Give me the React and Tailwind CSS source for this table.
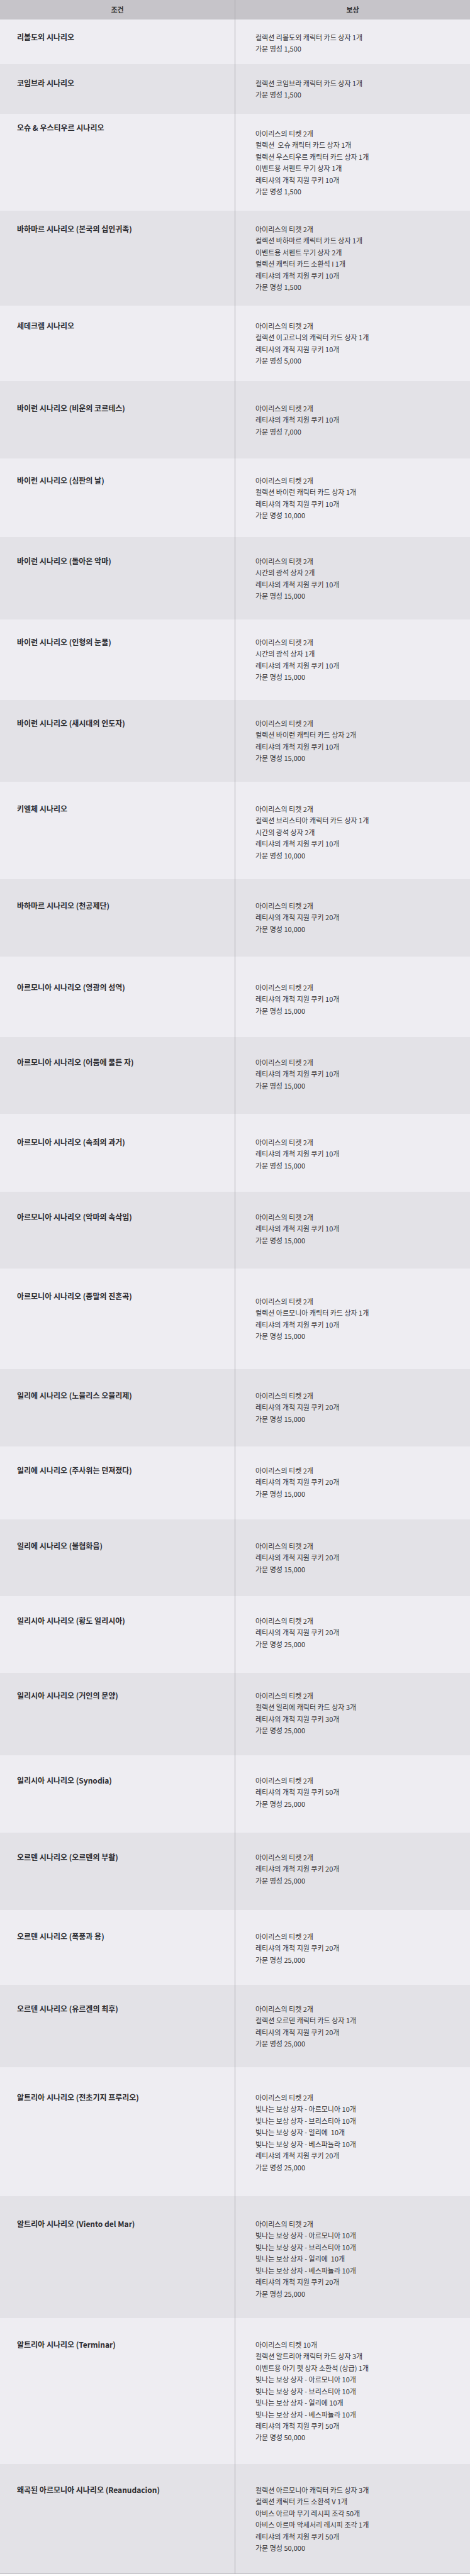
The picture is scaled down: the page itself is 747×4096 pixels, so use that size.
const ticket = '아이리스의 티켓 2개'
const cookie = (n) => `레티샤의 개척 지원 쿠키 ${n}개`
const fame = (n) => `가문 명성 ${n}`
const shining = [
  '빛나는 보상 상자 - 아르모니아 10개',
  '빛나는 보상 상자 - 브리스티아 10개',
  '빛나는 보상 상자 - 일리에  10개',
  '빛나는 보상 상자 - 베스파뇰라 10개',
]

// h: row height, l / r: top offset of the condition and reward text
const rows = [
  { title: '리볼도외 시나리오', h: 'h-[71px]', l: 'pt-[19px]', r: 'pt-[19px]', items: ['컬렉션 리볼도외 캐릭터 카드 상자 1개', fame('1,500')] },
  { title: '코임브라 시나리오', h: 'h-[79px]', l: 'pt-[21px]', r: 'pt-[21px]', items: ['컬렉션 코임브라 캐릭터 카드 상자 1개', fame('1,500')] },
  { title: '오슈 & 우스티우르 시나리오', h: 'h-[154px]', l: 'pt-[13px]', r: 'pt-[22px]', items: [ticket, '컬렉션  오슈 캐릭터 카드 상자 1개', '컬렉션 우스티우르 캐릭터 카드 상자 1개', '이벤트용 서펜트 무기 상자 1개', cookie(10), fame('1,500')] },
  { title: '바하마르 시나리오 (본국의 십인귀족)', h: 'h-[151px]', l: 'pt-[20px]', r: 'pt-[20px]', items: [ticket, '컬렉션 바하마르 캐릭터 카드 상자 1개', '이벤트용 서펜트 무기 상자 2개', '컬렉션 캐릭터 카드 소환석 I 1개', cookie(10), fame('1,500')] },
  { title: '세데크렘 시나리오', h: 'h-[120px]', l: 'pt-[23px]', r: 'pt-[23px]', items: [ticket, '컬렉션 이고르니의 캐릭터 카드 상자 1개', cookie(10), fame('5,000')] },
  { title: '바이런 시나리오 (비운의 코르테스)', h: 'h-[123px]', l: 'pt-[34px]', r: 'pt-[34px]', items: [ticket, cookie(10), fame('7,000')] },
  { title: '바이런 시나리오 (심판의 날)', h: 'h-[125px]', l: 'pt-[26px]', r: 'pt-[26px]', items: [ticket, '컬렉션 바이런 캐릭터 카드 상자 1개', cookie(10), fame('10,000')] },
  { title: '바이런 시나리오 (돌아온 악마)', h: 'h-[131px]', l: 'pt-[29px]', r: 'pt-[29px]', items: [ticket, '시간의 광석 상자 2개', cookie(10), fame('15,000')] },
  { title: '바이런 시나리오 (인형의 눈물)', h: 'h-[128px]', l: 'pt-[27px]', r: 'pt-[27px]', items: [ticket, '시간의 광석 상자 1개', cookie(10), fame('15,000')] },
  { title: '바이런 시나리오 (새시대의 인도자)', h: 'h-[130px]', l: 'pt-[28px]', r: 'pt-[28px]', items: [ticket, '컬렉션 바이런 캐릭터 카드 상자 2개', cookie(10), fame('15,000')] },
  { title: '키엘체 시나리오', h: 'h-[155px]', l: 'pt-[34px]', r: 'pt-[34px]', items: [ticket, '컬렉션 브리스티아 캐릭터 카드 상자 1개', '시간의 광석 상자 2개', cookie(10), fame('10,000')] },
  { title: '바하마르 시나리오 (천공제단)', h: 'h-[123px]', l: 'pt-[33px]', r: 'pt-[33px]', items: [ticket, cookie(20), fame('10,000')] },
  { title: '아르모니아 시나리오 (영광의 성역)', h: 'h-[128px]', l: 'pt-[40px]', r: 'pt-[40px]', items: [ticket, cookie(10), fame('15,000')] },
  { title: '아르모니아 시나리오 (어둠에 물든 자)', h: 'h-[122px]', l: 'pt-[31px]', r: 'pt-[31px]', items: [ticket, cookie(10), fame('15,000')] },
  { title: '아르모니아 시나리오 (속죄의 과거)', h: 'h-[124px]', l: 'pt-[36px]', r: 'pt-[36px]', items: [ticket, cookie(10), fame('15,000')] },
  { title: '아르모니아 시나리오 (악마의 속삭임)', h: 'h-[122px]', l: 'pt-[31px]', r: 'pt-[31px]', items: [ticket, cookie(10), fame('15,000')] },
  { title: '아르모니아 시나리오 (종말의 진혼곡)', h: 'h-[160px]', l: 'pt-[35px]', r: 'pt-[43px]', items: [ticket, '컬렉션 아르모니아 캐릭터 카드 상자 1개', cookie(10), fame('15,000')] },
  { title: '일리에 시나리오 (노블리스 오블리제)', h: 'h-[123px]', l: 'pt-[33px]', r: 'pt-[33px]', items: [ticket, cookie(20), fame('15,000')] },
  { title: '일리에 시나리오 (주사위는 던져졌다)', h: 'h-[116px]', l: 'pt-[29px]', r: 'pt-[29px]', items: [ticket, cookie(20), fame('15,000')] },
  { title: '일리에 시나리오 (불협화음)', h: 'h-[122px]', l: 'pt-[33px]', r: 'pt-[33px]', items: [ticket, cookie(20), fame('15,000')] },
  { title: '일리시아 시나리오 (황도 일리시아)', h: 'h-[122px]', l: 'pt-[30px]', r: 'pt-[30px]', items: [ticket, cookie(20), fame('25,000')] },
  { title: '일리시아 시나리오 (거인의 문양)', h: 'h-[131px]', l: 'pt-[27px]', r: 'pt-[27px]', items: [ticket, '컬렉션 일리에 캐릭터 카드 상자 3개', cookie(30), fame('25,000')] },
  { title: '일리시아 시나리오 (Synodia)', h: 'h-[123px]', l: 'pt-[31px]', r: 'pt-[31px]', items: [ticket, cookie(50), fame('25,000')] },
  { title: '오르덴 시나리오 (오르덴의 부활)', h: 'h-[123px]', l: 'pt-[30px]', r: 'pt-[30px]', items: [ticket, cookie(20), fame('25,000')] },
  { title: '오르덴 시나리오 (폭풍과 용)', h: 'h-[119px]', l: 'pt-[33px]', r: 'pt-[33px]', items: [ticket, cookie(20), fame('25,000')] },
  { title: '오르덴 시나리오 (유르겐의 최후)', h: 'h-[131px]', l: 'pt-[29px]', r: 'pt-[29px]', items: [ticket, '컬렉션 오르덴 캐릭터 카드 상자 1개', cookie(20), fame('25,000')] },
  { title: '알트리아 시나리오 (전초기지 프루리오)', h: 'h-[205px]', l: 'pt-[39px]', r: 'pt-[39px]', items: [ticket, ...shining, cookie(20), fame('25,000')] },
  { title: '알트리아 시나리오 (Viento del Mar)', h: 'h-[194px]', l: 'pt-[35px]', r: 'pt-[35px]', items: [ticket, ...shining, cookie(20), fame('25,000')] },
  { title: '알트리아 시나리오 (Terminar)', h: 'h-[232px]', l: 'pt-[33px]', r: 'pt-[33px]', items: ['아이리스의 티켓 10개', '컬렉션 알트리아 캐릭터 카드 상자 3개', '이벤트용 아기 펫 상자 소환석 (상급) 1개', '빛나는 보상 상자 - 아르모니아 10개', '빛나는 보상 상자 - 브리스티아 10개', '빛나는 보상 상자 - 일리에 10개', '빛나는 보상 상자 - 베스파뇰라 10개', cookie(50), fame('50,000')] },
  { title: '왜곡된 아르모니아 시나리오 (Reanudacion)', h: 'h-[174px]', l: 'pt-[32px]', r: 'pt-[32px]', items: ['컬렉션 아르모니아 캐릭터 카드 상자 3개', '컬렉션 캐릭터 카드 소환석 V 1개', '아비스 아르마 무기 레시피 조각 50개', '아비스 아르마 악세서리 레시피 조각 1개', cookie(50), fame('50,000')] },
]

export default function App() {
  return (
    <div className="w-[747px] font-['Noto_Sans_CJK_KR','Noto_Sans',sans-serif] text-[#333]">
      <div className="grid grid-cols-[374px_373px] h-[31px] bg-[#c6c4c9]">
        <div className="flex items-center justify-center border-r border-[#a9a8ad] text-[11px] font-bold">조건</div>
        <div className="flex items-center justify-center text-[11px] font-bold">보상</div>
      </div>

      <div className="border-b border-[#b4b3b8]">
        {rows.map((row, i) => (
          <div
            key={row.title}
            className={`grid grid-cols-[374px_373px] ${row.h} ${i % 2 ? 'bg-[#e3e2e7]' : 'bg-[#eeedf2]'}`}
          >
            <div className={`border-r border-[#a9a8ad] pl-[27px] ${row.l}`}>
              <p className="text-[12px] font-bold leading-[18.42px] text-[#2b2b2f]">{row.title}</p>
            </div>
            <div className={`pl-[32px] ${row.r}`}>
              {row.items.map((item, k) => (
                <p key={k} className="text-[11px] leading-[18.42px] text-[#333336] whitespace-pre">{item}</p>
              ))}
            </div>
          </div>
        ))}
      </div>
    </div>
  )
}
